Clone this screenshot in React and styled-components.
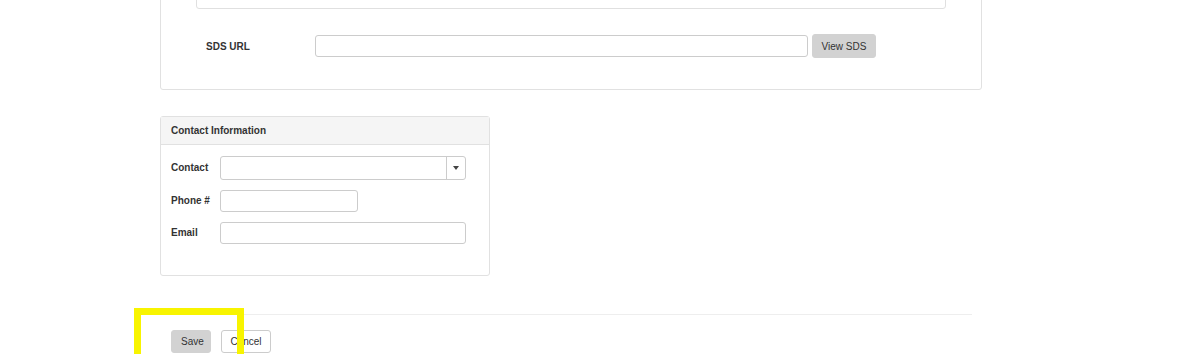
import styled, { createGlobalStyle } from "styled-components";

const GlobalStyle = createGlobalStyle`
  body {
    margin: 0;
    background: #ffffff;
    font-family: "Liberation Sans", Arial, sans-serif;
    font-size: 10px;
    color: #333333;
  }
`;

const Page = styled.div`
  position: relative;
  width: 1200px;
  height: 354px;
  overflow: hidden;
`;

// page is scrolled, so the top of the first panel sits above the viewport
const Content = styled.div`
  margin-top: -70px;
  padding-left: 160px;
`;

const Panel = styled.div`
  width: ${(p) => p.width}px;
  box-sizing: border-box;
  border: 1px solid #e1e1e1;
  border-radius: 3px;
  background: #fff;
  margin-top: ${(p) => p.gap || 0}px;
`;

const PanelBody = styled.div`
  padding: 15px 35px 31px 35px;
`;

const InnerBox = styled.div`
  height: 63px;
  box-sizing: border-box;
  border: 1px solid #e0e0e0;
  border-radius: 3px;
`;

const UrlRow = styled.div`
  display: flex;
  align-items: center;
  height: 24px;
  margin-top: 25px;
`;

const UrlLabel = styled.label`
  width: 109px;
  padding-left: 10px;
  font-weight: bold;
  color: #333;
`;

const Input = styled.input`
  box-sizing: border-box;
  width: ${(p) => p.width}px;
  height: ${(p) => p.h || 22}px;
  border: 1px solid #cccccc;
  border-radius: 3px;
  background: #fff;
  padding: 0 6px;
  font: inherit;
  outline: none;
`;

const Button = styled.button`
  box-sizing: border-box;
  height: ${(p) => p.h || 23}px;
  padding: 0 ${(p) => p.px || 8}px;
  border: 1px solid ${(p) => (p.primary ? "#d2d2d2" : "#cccccc")};
  border-radius: 3px;
  background: ${(p) => (p.primary ? "#d2d2d2" : "#ffffff")};
  color: #333;
  font-family: "Liberation Sans", Arial, sans-serif;
  font-size: 10px;
  cursor: pointer;
`;

const ViewButton = styled(Button)`
  margin-left: 4px;
  width: 64px;
  padding: 0;
`;

const PanelHeader = styled.div`
  height: 27px;
  display: flex;
  align-items: center;
  padding-left: 10px;
  background: #f5f5f5;
  border-bottom: 1px solid #e1e1e1;
  font-weight: bold;
  color: #333;
`;

const FormBody = styled.div`
  padding: 11px 10px 31px 10px;
  display: flex;
  flex-direction: column;
  gap: 10px;
`;

const FormRow = styled.div`
  display: flex;
  align-items: center;
`;

const FieldLabel = styled.label`
  width: 49px;
  font-weight: bold;
  color: #333;
  margin-top: -2px;
`;

const Select = styled.div`
  box-sizing: border-box;
  width: 246px;
  height: 24px;
  display: flex;
  border: 1px solid #cccccc;
  border-radius: 3px;
  background: #fff;
`;

const SelectValue = styled.div`
  flex: 1;
`;

const SelectArrow = styled.div`
  width: 18px;
  border-left: 1px solid #cccccc;
  display: flex;
  align-items: center;
  justify-content: center;

  &::after {
    content: "";
    border-left: 3px solid transparent;
    border-right: 3px solid transparent;
    border-top: 4px solid #444;
  }
`;

const Divider = styled.hr`
  width: 812px;
  margin: 38px 0 0 0;
  border: none;
  border-top: 1px solid #eeeeee;
`;

const Actions = styled.div`
  display: flex;
  gap: 10px;
  margin-top: 15px;
  padding-left: 11px;
`;

const Highlight = styled.div`
  position: absolute;
  left: 134px;
  top: 308px;
  width: 110px;
  height: 60px;
  box-sizing: border-box;
  border: 7px solid #f8f400;
  pointer-events: none;
`;

export default function App() {
  return (
    <>
      <GlobalStyle />
      <Page>
        <Content>
          <Panel width={822}>
            <PanelBody>
              <InnerBox />
              <UrlRow>
                <UrlLabel>SDS URL</UrlLabel>
                <Input width={493} />
                <ViewButton primary h={24}>View SDS</ViewButton>
              </UrlRow>
            </PanelBody>
          </Panel>

          <Panel width={330} gap={26}>
            <PanelHeader>Contact Information</PanelHeader>
            <FormBody>
              <FormRow>
                <FieldLabel>Contact</FieldLabel>
                <Select>
                  <SelectValue />
                  <SelectArrow />
                </Select>
              </FormRow>
              <FormRow>
                <FieldLabel>Phone #</FieldLabel>
                <Input width={138} />
              </FormRow>
              <FormRow>
                <FieldLabel>Email</FieldLabel>
                <Input width={246} />
              </FormRow>
            </FormBody>
          </Panel>

          <Divider />
          <Actions>
            <Button primary px={9} style={{ width: 40 }}>Save</Button>
            <Button style={{ width: 50 }}>Cancel</Button>
          </Actions>
        </Content>
        <Highlight />
      </Page>
    </>
  );
}
